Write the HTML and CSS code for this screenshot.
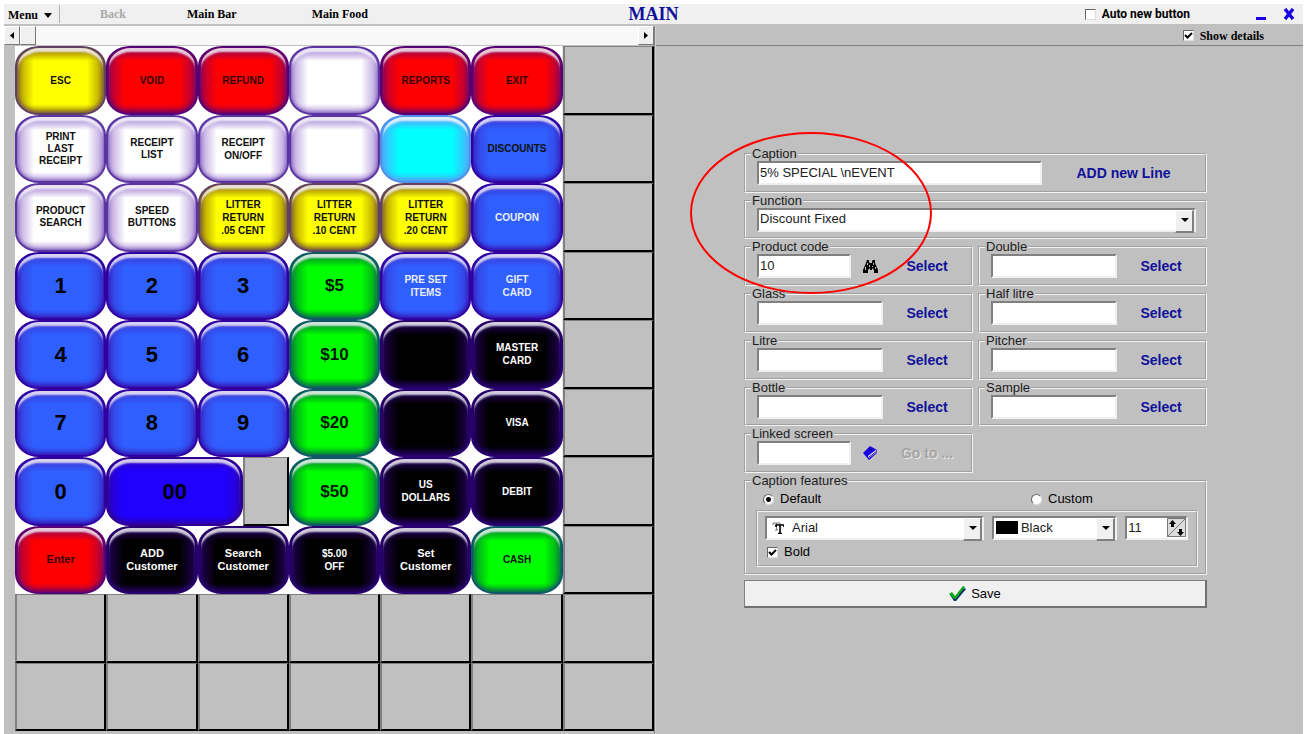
FILE: index.html
```html
<!DOCTYPE html>
<html lang="en">
<head>
<meta charset="utf-8">
<title>MAIN</title>
<link rel="stylesheet" href="styles.css">
</head>
<body>
<div class="window">
  <header class="titlebar">
    <nav class="menu">
      <button class="menu-main">Menu <svg width="8" height="5" viewBox="0 0 8 5"><path d="M0 0h8L4 5z"/></svg></button>
      <button class="menu-item" disabled>Back</button>
      <button class="menu-item">Main Bar</button>
      <button class="menu-item">Main Food</button>
    </nav>
    <h1 class="title">MAIN</h1>
    <div class="title-tools">
      <label class="check check-auto"><input type="checkbox">Auto new button</label>
      <button class="win-btn" aria-label="Minimize"><svg width="12" height="12" viewBox="0 0 12 12"><path d="M1 9h10v3H1z" fill="#1a00e6"/></svg></button>
      <button class="win-btn" aria-label="Close"><svg width="12" height="12" viewBox="0 0 12 12"><path d="M2 1l8 10M10 1L2 11" stroke="#1a00e6" stroke-width="3.4"/></svg></button>
    </div>
  </header>
  <main class="panes">
    <section class="left">
      <div class="scroll">
        <button class="scroll-btn" aria-label="Scroll left"><svg width="4" height="7" viewBox="0 0 4 7"><path d="M4 0v7L0 3.500z"/></svg></button>
        <div class="scroll-thumb"></div>
        <div class="scroll-track"></div>
        <button class="scroll-btn" aria-label="Scroll right"><svg width="4" height="7" viewBox="0 0 4 7"><path d="M0 0v7l4-3.500z"/></svg></button>
      </div>
      <div class="keys">
        <button class="key yellow">ESC</button>
        <button class="key red">VOID</button>
        <button class="key red">REFUND</button>
        <button class="key white" aria-label="Blank"></button>
        <button class="key red">REPORTS</button>
        <button class="key red">EXIT</button>
        <button class="slot" aria-label="Empty"></button>

        <button class="key white tight">PRINT<br>LAST<br>RECEIPT</button>
        <button class="key white tight">RECEIPT<br>LIST</button>
        <button class="key white">RECEIPT<br>ON/OFF</button>
        <button class="key white" aria-label="Blank"></button>
        <button class="key cyan" aria-label="Blank"></button>
        <button class="key blue">DISCOUNTS</button>
        <button class="slot" aria-label="Empty"></button>

        <button class="key white tight">PRODUCT<br>SEARCH</button>
        <button class="key white tight">SPEED<br>BUTTONS</button>
        <button class="key yellow">LITTER<br>RETURN<br>.05 CENT</button>
        <button class="key yellow">LITTER<br>RETURN<br>.10 CENT</button>
        <button class="key yellow">LITTER<br>RETURN<br>.20 CENT</button>
        <button class="key blue light">COUPON</button>
        <button class="slot" aria-label="Empty"></button>

        <button class="key blue digit">1</button>
        <button class="key blue digit">2</button>
        <button class="key blue digit">3</button>
        <button class="key green cash">$5</button>
        <button class="key blue light">PRE SET<br>ITEMS</button>
        <button class="key blue light">GIFT<br>CARD</button>
        <button class="slot" aria-label="Empty"></button>

        <button class="key blue digit">4</button>
        <button class="key blue digit">5</button>
        <button class="key blue digit">6</button>
        <button class="key green cash">$10</button>
        <button class="key black" aria-label="Blank"></button>
        <button class="key black">MASTER<br>CARD</button>
        <button class="slot" aria-label="Empty"></button>

        <button class="key blue digit">7</button>
        <button class="key blue digit">8</button>
        <button class="key blue digit">9</button>
        <button class="key green cash">$20</button>
        <button class="key black" aria-label="Blank"></button>
        <button class="key black">VISA</button>
        <button class="slot" aria-label="Empty"></button>

        <button class="key blue digit">0</button>
        <div class="double">
          <button class="key royal digit">00</button>
          <button class="slot" aria-label="Empty"></button>
        </div>
        <button class="key green cash">$50</button>
        <button class="key black">US<br>DOLLARS</button>
        <button class="key black">DEBIT</button>
        <button class="slot" aria-label="Empty"></button>

        <button class="key red mixed">Enter</button>
        <button class="key black mixed">ADD<br>Customer</button>
        <button class="key black mixed">Search<br>Customer</button>
        <button class="key black">$5.00<br>OFF</button>
        <button class="key black mixed">Set<br>Customer</button>
        <button class="key green">CASH</button>
        <button class="slot" aria-label="Empty"></button>

        <button class="slot" aria-label="Empty"></button>
        <button class="slot" aria-label="Empty"></button>
        <button class="slot" aria-label="Empty"></button>
        <button class="slot" aria-label="Empty"></button>
        <button class="slot" aria-label="Empty"></button>
        <button class="slot" aria-label="Empty"></button>
        <button class="slot" aria-label="Empty"></button>

        <button class="slot" aria-label="Empty"></button>
        <button class="slot" aria-label="Empty"></button>
        <button class="slot" aria-label="Empty"></button>
        <button class="slot" aria-label="Empty"></button>
        <button class="slot" aria-label="Empty"></button>
        <button class="slot" aria-label="Empty"></button>
        <button class="slot" aria-label="Empty"></button>
      </div>
    </section>

    <section class="right">
      <div class="details-bar">
        <label class="check"><input type="checkbox" checked>Show details</label>
      </div>
      <form class="form">
        <div class="rows">
          <fieldset class="group wide">
            <legend>Caption</legend>
            <div class="line"><input class="box" type="text" aria-label="Caption" value="5% SPECIAL \nEVENT"><button type="button" class="link-btn add">ADD new Line</button></div>
          </fieldset>
          <fieldset class="group wide">
            <legend>Function</legend>
            <div class="line function"><span class="drop"><select class="box" aria-label="Function"><option>Discount Fixed</option></select></span></div>
          </fieldset>
          <fieldset class="group">
            <legend>Product code</legend>
            <div class="line"><input class="box" type="text" aria-label="Product code" value="10">
              <button type="button" class="icon-btn" aria-label="Find"><svg width="15" height="13" viewBox="0 0 15 13"><path d="M4 0h2v2l1 1h2V1l1-1h2v3l3 7v3h-4v-3L9 8v2H7V8l-2 2v3H0v-3l3-7z"/><path d="M4.500 3v2M2.500 7v3M6.500 5v2M10.500 3v2M9.500 6v1M12.500 7v2" stroke="#c0c0c0" fill="none"/></svg></button><button type="button" class="link-btn">Select</button></div>
          </fieldset>
          <fieldset class="group">
            <legend>Double</legend>
            <div class="line"><input class="box" type="text" aria-label="Double"><button type="button" class="link-btn">Select</button></div>
          </fieldset>
          <fieldset class="group">
            <legend>Glass</legend>
            <div class="line"><input class="box" type="text" aria-label="Glass"><button type="button" class="link-btn">Select</button></div>
          </fieldset>
          <fieldset class="group">
            <legend>Half litre</legend>
            <div class="line"><input class="box" type="text" aria-label="Half litre"><button type="button" class="link-btn">Select</button></div>
          </fieldset>
          <fieldset class="group">
            <legend>Litre</legend>
            <div class="line"><input class="box" type="text" aria-label="Litre"><button type="button" class="link-btn">Select</button></div>
          </fieldset>
          <fieldset class="group">
            <legend>Pitcher</legend>
            <div class="line"><input class="box" type="text" aria-label="Pitcher"><button type="button" class="link-btn">Select</button></div>
          </fieldset>
          <fieldset class="group">
            <legend>Bottle</legend>
            <div class="line"><input class="box" type="text" aria-label="Bottle"><button type="button" class="link-btn">Select</button></div>
          </fieldset>
          <fieldset class="group">
            <legend>Sample</legend>
            <div class="line"><input class="box" type="text" aria-label="Sample"><button type="button" class="link-btn">Select</button></div>
          </fieldset>
          <fieldset class="group">
            <legend>Linked screen</legend>
            <div class="line"><input class="box" type="text" aria-label="Linked screen">
              <button type="button" class="icon-btn" aria-label="Clear"><svg width="15" height="14" viewBox="0 0 15 14"><path d="M0 7l7-7 7 4v3l-8 7z" fill="#1a00e6"/><path d="M5 10l8-6 1 1v1l-8 6z" fill="#fff"/><path d="M6 11l8-6" stroke="#1a1a70"/><path d="M6 4l2-1v2" stroke="#0a0070" fill="none"/></svg></button><button type="button" class="link-btn" disabled>Go to ...</button></div>
          </fieldset>
        </div>
        <fieldset class="group features">
          <legend>Caption features</legend>
          <div class="modes">
            <label class="check"><input type="radio" name="mode" checked>Default</label>
            <label class="check"><input type="radio" name="mode">Custom</label>
          </div>
          <div class="style-panel">
            <div class="style-row">
              <span class="drop font-drop">
                <svg class="drop-icon" width="12" height="12" viewBox="0 0 12 12"><path d="M1 3V1h7v2M4.500 1v7M3 8h3" stroke="#777" fill="none"/><path d="M4 5V3h8v2M8 3v8M6 11.500h4" stroke="#000" stroke-width="1.600" fill="none"/></svg>
                <select class="box" aria-label="Font"><option>Arial</option></select>
              </span>
              <span class="drop color-drop">
                <span class="swatch"></span>
                <select class="box" aria-label="Colour"><option>Black</option></select>
              </span>
              <span class="spin">
                <input class="box" type="text" aria-label="Size" value="11">
                <button type="button" class="spin-btn" aria-label="Change size"><svg width="19" height="19" viewBox="0 0 19 19"><path d="M.500 .500h18v18H.500zM0 19L19 0" stroke="#777" fill="none"/><path d="M5.500 2L9 6H7v3H4V6H2zM13.500 18l3.500-4h-2v-3h-3v3h-2z"/></svg></button>
              </span>
            </div>
            <label class="check"><input type="checkbox" checked>Bold</label>
          </div>
        </fieldset>
        <button type="button" class="save"><svg width="17" height="15" viewBox="0 0 17 15"><path d="M1 9l2-2 3 4 9-9 2 1-10 12H5z" fill="#0a2a6a"/><path d="M0 8l3-2 3 4 8-10 2 1-9 12H5z" fill="#08a818"/></svg>Save</button>
        <svg class="callout" viewBox="0 0 242 164"><ellipse cx="121" cy="82" rx="120" ry="80" fill="none" stroke="#f00" stroke-width="2"/></svg>
      </form>
    </section>
  </main>
</div>
</body>
</html>
```
FILE: styles.css
```css
* { box-sizing: border-box; }

body {
  margin: 0;
  background: #fff;
  color: #000;
  font: 13px/14px "Liberation Sans", Arial, sans-serif;
}

button, input, select { font: inherit; color: inherit; margin: 0; }
button { padding: 0; border: 0; background: none; }

.window {
  display: flex;
  flex-direction: column;
  min-height: 100vh;
  padding: 4px 3px 0 4px;
}

/* Title bar */
.titlebar {
  display: grid;
  grid-template-columns: 1fr auto 1fr;
  align-items: center;
  height: 22px;
  background: #f0f0f0;
  border-bottom: 2px solid #c0c0c0;
}
.menu {
  display: flex;
  align-items: center;
  font: bold 12px/18px "Liberation Serif", "Times New Roman", serif;
}
.menu-main {
  display: flex;
  align-items: center;
  gap: 6px;
  width: 56px;
  padding: 2px 0 0 4px;
  line-height: 16px;
  border-right: 1px solid #b0b0b0;
}
.menu-item { margin-left: 40px; }
.menu-item + .menu-item { margin-left: 61px; }
.menu-item + .menu-item + .menu-item { margin-left: 75px; }
.menu-item:disabled { color: #a8a8a8; }
.title {
  margin: 0;
  color: #10109a;
  font: bold 18px/20px "Liberation Serif", "Times New Roman", serif;
}
.title-tools {
  display: flex;
  align-items: center;
  justify-content: flex-end;
  padding-right: 8px;
}
.check-auto { margin-right: 65px; font: bold 12px/16px Roboto, sans-serif; }
.win-btn { display: flex; margin-left: 16px; }
.check-auto + .win-btn { margin-left: 0; }

/* Tick boxes and radios */
.check { display: flex; align-items: center; gap: 6px; }
.check input {
  appearance: none;
  width: 11px;
  height: 11px;
  background: #fff;
  border: 1px solid #ddd;
  border-top-color: #666;
  border-left-color: #666;
}
.check input[type="radio"] { border-radius: 50%; }
.check input[type="checkbox"]:checked {
  background-image: url("data:image/svg+xml,%3Csvg xmlns='http://www.w3.org/2000/svg' viewBox='0 0 9 9'%3E%3Cpath d='M1 4l2.500 2.500L8 2' fill='none' stroke='%23000' stroke-width='2'/%3E%3C/svg%3E");
}
.check input[type="radio"]:checked { background-image: radial-gradient(circle, #000 2px, transparent 3px); }

/* Panes */
.panes {
  flex: 1;
  display: grid;
  grid-template-columns: 651fr 648fr;
  background: #c0c0c0;
}
.left { display: flex; flex-direction: column; border-right: 1px solid #808080; }
.right { border-left: 1px solid #d0d0d0; }

.scroll { display: flex; height: 20px; background: #f8f8f8; border-bottom: 1px solid #c0c0c0; }
.scroll-btn, .scroll-thumb {
  display: flex;
  align-items: center;
  justify-content: center;
  width: 16px;
  background: #f0f0f0;
  border: 1px solid #fff;
  border-right-color: #777;
  border-bottom-color: #777;
}
.scroll-track { flex: 1; }

.details-bar {
  display: flex;
  justify-content: flex-end;
  height: 20px;
  padding-right: 39px;
  border-bottom: 1px solid #808080;
  font: bold 12px/18px "Liberation Serif", "Times New Roman", serif;
}

/* Key grid */
.keys {
  flex: 1;
  display: grid;
  grid-template-columns: repeat(7, minmax(0, 1fr));
  grid-template-rows: repeat(10, minmax(60px, 1fr));
  margin: 0 0 3px 11px;
  background: linear-gradient(#fff, #fff) 0 0 / 85.7% 80% no-repeat;
}
.key {
  --fill: #fff;
  --glow: #9070cc;
  --edge: #5030a0;
  position: relative;
  border: 2px solid var(--edge);
  border-radius: 24px / 20px;
  background:
    linear-gradient(90deg, var(--glow) 1px, transparent 17px, transparent calc(100% - 17px), var(--glow) calc(100% - 1px)),
    linear-gradient(var(--glow) 4px, transparent 13px, transparent calc(100% - 9px), var(--glow) 100%),
    var(--fill);
  box-shadow: inset 0 0 5px 1px var(--edge);
  color: #101010;
  font: bold 10px/13px "Liberation Sans", Arial, sans-serif;
}
.key::before {
  content: "";
  position: absolute;
  inset: 0 1px 4px;
  border-radius: 22px / 18px;
  box-shadow: inset 0 5px 2px -1px rgba(255, 255, 255, 0.8);
}
.white { --fill: #fff; --glow: #b9a0de; --edge: #5a35a2; }
.white, .cyan { box-shadow: inset 0 0 4px var(--edge); }
.red { --fill: #f00; --glow: #b00040; --edge: #560074; color: #300; }
.yellow { --fill: #ff0; --glow: #b09800; --edge: #624060; }
.blue { --fill: #2f60ff; --glow: #3840e0; --edge: #3000a0; }
.royal { --fill: #2000ff; --glow: #2800d0; --edge: #300090; }
.green { --fill: #0f0; --glow: #00a020; --edge: #105868; }
.cyan { --fill: #0ff; --glow: #48b4ff; --edge: #5090e8; }
.black { --fill: #000; --glow: #1c0048; --edge: #280070; color: #fff; }
.light { color: #e8ecff; }
.tight { line-height: 12px; }
.mixed { font-size: 11px; }
.digit { color: #000; font-size: 22px; }
.cash { color: #001800; font-size: 17px; }

.slot {
  background: #c0c0c0;
  border: 1px solid #808080;
  border-left-width: 2px;
  border-right: 2px solid #000;
  border-bottom: 2px solid #000;
}
.double { grid-column: span 2; display: grid; grid-template-columns: 3fr 1fr; background: #fff; }

/* Details form */
.form { position: relative; padding: 101px 96px 0 88px; }
.rows {
  display: grid;
  grid-template-columns: 1fr 1fr;
  grid-template-rows: repeat(7, 1fr);
  column-gap: 5px;
  min-height: 327px;
}
.group {
  min-width: 0;
  margin: 0 0 1px;
  padding: 0 0 0 11px;
  border: 2px solid #dcdcdc;
  border-top-color: #d4d4d4;
  border-left-color: #d4d4d4;
  outline: 1px solid #acacac;
  outline: 0;
}
.group, .style-panel { border-style: ridge; border-color: #dedede; }
.group, .style-panel { border-style: groove; border-color: #f4f4f4; }
.group legend { margin-left: -6px; padding: 0 1px; color: #202020; }
.wide { grid-column: span 2; }
.line { display: flex; height: 24px; }
.function { padding-right: 9px; }
.box {
  flex: 1;
  min-width: 0;
  width: 100%;
  height: 24px;
  padding: 0 0 1px 1px;
  appearance: none;
  background: #fff;
  border: 2px solid #f0f0f0;
  border-top-color: #808080;
  border-left-color: #808080;
  border-radius: 0;
  color: #202020;
}
.drop { position: relative; display: flex; flex: 1; min-width: 0; }
.drop::after {
  content: "";
  position: absolute;
  top: 2px;
  right: 2px;
  width: 16px;
  height: calc(100% - 4px);
  background: #f0f0f0;
  border: 1px solid #fff;
  border-right: 2px solid #808080;
  border-bottom: 2px solid #808080;
  pointer-events: none;
}
.drop::before {
  content: "";
  position: absolute;
  z-index: 1;
  top: 10px;
  right: 7px;
  border: 4px solid transparent;
  border-top-color: #000;
  border-bottom: 0;
  pointer-events: none;
}
.link-btn { width: 88px; color: #10109a; font-weight: bold; font-size: 14px; }
.link-btn:disabled { color: #a4a4a4; text-shadow: 1px 1px #e8e8e8; }
.add { width: 163px; }
.icon-btn { display: flex; align-items: center; justify-content: flex-end; width: 32px; padding-right: 5px; }

.features { margin: 0; padding: 4px 7px 6px 10px; }
.features legend { margin-left: -5px; }
.modes { display: grid; grid-template-columns: 268px 1fr; padding: 0 0 4px 7px; }
.style-panel {
  padding: 4px 8px 6px 7px;
  border-width: 2px;
}
.style-row { display: flex; gap: 8px; margin-bottom: 5px; }
.style-panel .check { padding-left: 2px; }
.font-drop { flex: 220; }
.color-drop { flex: 126; }
.font-drop .box { padding-left: 25px; }
.color-drop .box { padding-left: 27px; }
.drop-icon { position: absolute; left: 7px; top: 6px; }
.swatch { position: absolute; left: 4px; top: 5px; width: 22px; height: 13px; background: #000; }
.spin { position: relative; display: flex; flex: 63; }
.spin-btn { position: absolute; right: 2px; top: 2px; display: flex; background: #dcdcdc; }

.save {
  display: flex;
  align-items: center;
  justify-content: center;
  gap: 5px;
  width: 100%;
  height: 28px;
  margin-top: 5px;
  background: #f0f0f0;
  border: 1px solid #808080;
  border-right: 2px solid #707070;
  border-bottom: 2px solid #707070;
}

.callout {
  position: absolute;
  left: 34px;
  top: 85px;
  width: 242px;
  height: 164px;
  pointer-events: none;
}
```
